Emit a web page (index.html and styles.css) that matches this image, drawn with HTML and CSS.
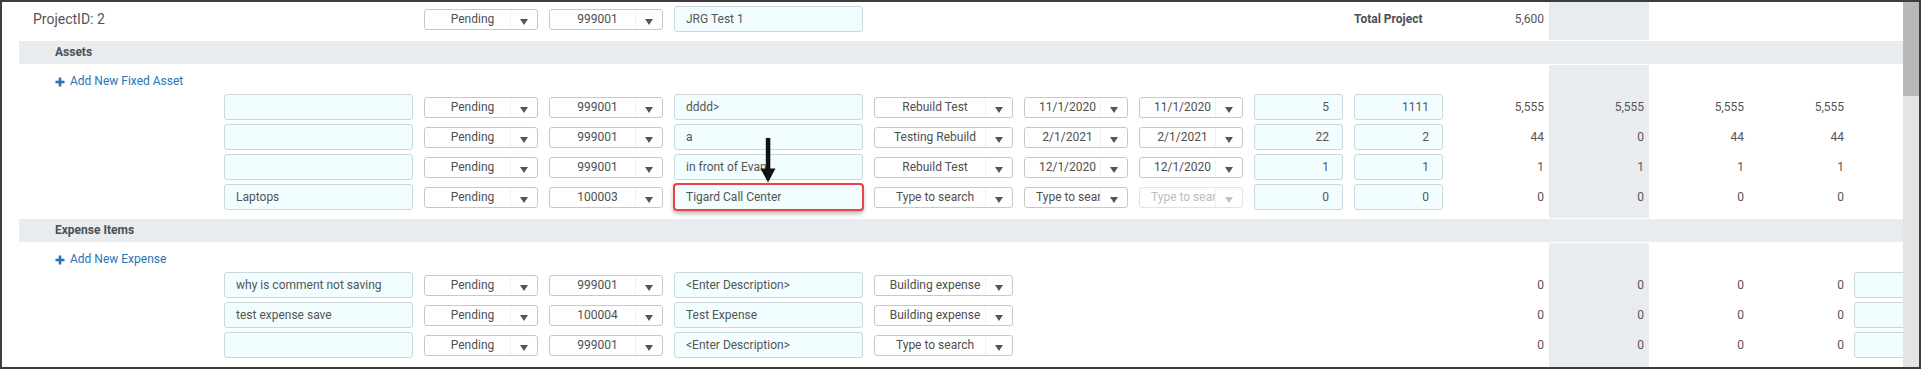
FILE: index.html
```html
<!DOCTYPE html>
<html lang="en">
<head>
    <meta charset="UTF-8">
    <title>Project Budget</title>
    <link rel="stylesheet" href="styles.css">
</head>
<body>
    <div class="frame">
        <div class="page">

            <!-- Project header row -->
            <div class="block block-top">
                <div class="row row-top">
                    <div class="lead project-id">ProjectID: 2</div>
                    <div class="skip-wide"></div>
                    <span class="dd w-status"><span class="dd-text">Pending</span><span class="dd-btn"></span></span>
                    <span class="dd w-project"><span class="dd-text">999001</span><span class="dd-btn"></span></span>
                    <input class="tb w-wide" value="JRG Test 1">
                    <div class="skip-top"></div>
                    <div class="total-label">Total Project</div>
                    <div class="val val-first">5,600</div>
                </div>
            </div>

            <!-- Assets -->
            <div class="band">Assets</div>
            <div class="block block-assets">
                <div class="add-row">
                    <a class="add-link" href="#">
                        <svg width="10" height="10" viewBox="0 0 10 10"><rect x="3.7" y="0.5" width="2.6" height="9" fill="currentColor"/><rect x="0.5" y="3.7" width="9" height="2.6" fill="currentColor"/></svg>
                        Add New Fixed Asset
                    </a>
                </div>

                <div class="row">
                    <div class="lead"></div>
                    <input class="tb w-wide" value="">
                    <span class="dd w-status"><span class="dd-text">Pending</span><span class="dd-btn"></span></span>
                    <span class="dd w-project"><span class="dd-text">999001</span><span class="dd-btn"></span></span>
                    <input class="tb w-wide" value="dddd&gt;">
                    <span class="dd w-type"><span class="dd-text">Rebuild Test</span><span class="dd-btn"></span></span>
                    <span class="dd w-date"><span class="dd-text">11/1/2020</span><span class="dd-btn"></span></span>
                    <span class="dd w-date"><span class="dd-text">11/1/2020</span><span class="dd-btn"></span></span>
                    <input class="tb w-num" value="5">
                    <input class="tb w-num" value="1111">
                    <div class="val val-first">5,555</div>
                    <div class="val">5,555</div>
                    <div class="val">5,555</div>
                    <div class="val">5,555</div>
                </div>

                <div class="row">
                    <div class="lead"></div>
                    <input class="tb w-wide" value="">
                    <span class="dd w-status"><span class="dd-text">Pending</span><span class="dd-btn"></span></span>
                    <span class="dd w-project"><span class="dd-text">999001</span><span class="dd-btn"></span></span>
                    <input class="tb w-wide" value="a">
                    <span class="dd w-type"><span class="dd-text">Testing Rebuild</span><span class="dd-btn"></span></span>
                    <span class="dd w-date"><span class="dd-text">2/1/2021</span><span class="dd-btn"></span></span>
                    <span class="dd w-date"><span class="dd-text">2/1/2021</span><span class="dd-btn"></span></span>
                    <input class="tb w-num" value="22">
                    <input class="tb w-num" value="2">
                    <div class="val val-first">44</div>
                    <div class="val">0</div>
                    <div class="val">44</div>
                    <div class="val">44</div>
                </div>

                <div class="row">
                    <div class="lead"></div>
                    <input class="tb w-wide" value="">
                    <span class="dd w-status"><span class="dd-text">Pending</span><span class="dd-btn"></span></span>
                    <span class="dd w-project"><span class="dd-text">999001</span><span class="dd-btn"></span></span>
                    <input class="tb w-wide" value="in front of Evan">
                    <span class="dd w-type"><span class="dd-text">Rebuild Test</span><span class="dd-btn"></span></span>
                    <span class="dd w-date"><span class="dd-text">12/1/2020</span><span class="dd-btn"></span></span>
                    <span class="dd w-date"><span class="dd-text">12/1/2020</span><span class="dd-btn"></span></span>
                    <input class="tb w-num" value="1">
                    <input class="tb w-num" value="1">
                    <div class="val val-first">1</div>
                    <div class="val">1</div>
                    <div class="val">1</div>
                    <div class="val">1</div>
                </div>

                <div class="row">
                    <div class="lead"></div>
                    <input class="tb w-wide" value="Laptops">
                    <span class="dd w-status"><span class="dd-text">Pending</span><span class="dd-btn"></span></span>
                    <span class="dd w-project"><span class="dd-text">100003</span><span class="dd-btn"></span></span>
                    <!-- annotated field -->
                    <span class="flag-wrap">
                        <input class="tb w-flag flagged" value="Tigard Call Center">
                        <svg class="flag-arrow" width="16" height="45" viewBox="0 0 16 45"><rect x="5.8" y="0" width="4.5" height="32" fill="#111"/><polygon points="0.5,30.5 15.5,30.5 8,44.5" fill="#111"/></svg>
                    </span>
                    <span class="dd w-type"><span class="dd-text">Type to search</span><span class="dd-btn"></span></span>
                    <span class="dd w-date"><span class="dd-text dd-clip">Type to search</span><span class="dd-btn"></span></span>
                    <span class="dd w-date is-disabled"><span class="dd-text dd-clip">Type to search</span><span class="dd-btn"></span></span>
                    <input class="tb w-num" value="0">
                    <input class="tb w-num" value="0">
                    <div class="val val-first">0</div>
                    <div class="val">0</div>
                    <div class="val">0</div>
                    <div class="val">0</div>
                </div>
            </div>

            <!-- Expense Items -->
            <div class="band">Expense Items</div>
            <div class="block block-expenses">
                <div class="add-row">
                    <a class="add-link" href="#">
                        <svg width="10" height="10" viewBox="0 0 10 10"><rect x="3.7" y="0.5" width="2.6" height="9" fill="currentColor"/><rect x="0.5" y="3.7" width="9" height="2.6" fill="currentColor"/></svg>
                        Add New Expense
                    </a>
                </div>

                <div class="row">
                    <div class="lead"></div>
                    <input class="tb w-wide" value="why is comment not saving">
                    <span class="dd w-status"><span class="dd-text">Pending</span><span class="dd-btn"></span></span>
                    <span class="dd w-project"><span class="dd-text">999001</span><span class="dd-btn"></span></span>
                    <input class="tb w-wide" value="<Enter Description>">
                    <span class="dd w-type"><span class="dd-text">Building expense</span><span class="dd-btn"></span></span>
                    <div class="skip-asset"></div>
                    <div class="val val-first">0</div>
                    <div class="val">0</div>
                    <div class="val">0</div>
                    <div class="val">0</div>
                    <input class="tb w-tail" value="">
                </div>

                <div class="row">
                    <div class="lead"></div>
                    <input class="tb w-wide" value="test expense save">
                    <span class="dd w-status"><span class="dd-text">Pending</span><span class="dd-btn"></span></span>
                    <span class="dd w-project"><span class="dd-text">100004</span><span class="dd-btn"></span></span>
                    <input class="tb w-wide" value="Test Expense">
                    <span class="dd w-type"><span class="dd-text">Building expense</span><span class="dd-btn"></span></span>
                    <div class="skip-asset"></div>
                    <div class="val val-first">0</div>
                    <div class="val">0</div>
                    <div class="val">0</div>
                    <div class="val">0</div>
                    <input class="tb w-tail" value="">
                </div>

                <div class="row">
                    <div class="lead"></div>
                    <input class="tb w-wide" value="">
                    <span class="dd w-status"><span class="dd-text">Pending</span><span class="dd-btn"></span></span>
                    <span class="dd w-project"><span class="dd-text">999001</span><span class="dd-btn"></span></span>
                    <input class="tb w-wide" value="<Enter Description>">
                    <span class="dd w-type"><span class="dd-text">Type to search</span><span class="dd-btn"></span></span>
                    <div class="skip-asset"></div>
                    <div class="val val-first">0</div>
                    <div class="val">0</div>
                    <div class="val">0</div>
                    <div class="val">0</div>
                    <input class="tb w-tail" value="">
                </div>
            </div>
        </div>

        <div class="scrollbar"><div class="thumb"></div></div>
    </div>
</body>
</html>
```

FILE: styles.css
```css
html, body {
    margin: 0;
    padding: 0;
    background: #fff;
}

body {
    font-family: Roboto, "Liberation Sans", Arial, sans-serif;
    font-size: 12px;
    color: #555;
}

.frame {
    width: 1921px;
    height: 369px;
    box-sizing: border-box;
    border: 2px solid #3d3d3d;
    display: flex;
    overflow: hidden;
}

.page {
    flex: 1;
    overflow: hidden;
    min-width: 0;
}

/* grey total column runs down every block */
.block {
    background: linear-gradient(to right, transparent 1547px, #e9ecef 1547px, #e9ecef 1647px, transparent 1647px);
}

.block-top {
    height: 38px;
}

.block-assets {
    padding-bottom: 6px;
}

.block-expenses {
    padding-bottom: 10px;
}

.band {
    margin: 1px 0 1px 17px;
    height: 23px;
    line-height: 23px;
    padding-left: 36px;
    background: #e9ecef;
    font-weight: bold;
    color: #4a4f55;
}

.row {
    display: flex;
    align-items: center;
    height: 30px;
    white-space: nowrap;
}

.row-top {
    height: 26px;
    padding-top: 4px;
}

.lead {
    width: 222px;
    flex: none;
}

.project-id {
    box-sizing: border-box;
    padding-left: 31px;
    font-size: 14px;
    color: #555;
}

.skip-wide { width: 200px; flex: none; }
.skip-top { width: 480px; flex: none; }
.skip-asset { width: 430px; flex: none; }

.total-label {
    width: 100px;
    flex: none;
    font-weight: bold;
    color: #4a4f55;
}

.add-row {
    height: 20px;
    padding: 7px 0 0 53px;
}

.add-link {
    display: inline-flex;
    align-items: center;
    gap: 5px;
    color: #2874b5;
    text-decoration: none;
    line-height: 19px;
}

.add-link svg {
    display: block;
}

/* text boxes */
.tb {
    flex: none;
    height: 26px;
    box-sizing: border-box;
    margin: 0 11px 0 0;
    padding: 0 11px;
    border: 1px solid #cbd8db;
    border-radius: 3px;
    background: #f1fdfe;
    font-family: inherit;
    font-size: 12px;
    color: #555;
    outline: none;
}

.w-wide { width: 189px; }
.w-num { width: 89px; text-align: right; padding-right: 13px; }
.w-tail { width: 100px; margin-left: 5px; }

.flag-wrap {
    position: relative;
    flex: none;
    display: flex;
    margin-right: 11px;
}

.w-flag { width: 189px; margin: 0; }

.tb.flagged {
    outline: 2px solid #ee4148;
    outline-offset: -1px;
    box-shadow: 0 3px 5px rgba(0, 0, 0, 0.35);
}

.flag-arrow {
    position: absolute;
    left: 86px;
    top: -46px;
}

/* dropdowns */
.dd {
    flex: none;
    display: flex;
    height: 21px;
    box-sizing: border-box;
    margin-right: 11px;
    border: 1px solid #c8c8c8;
    border-radius: 3px;
    background: #fff;
    color: #4f4f4f;
}

.w-status, .w-project { width: 114px; }
.w-type { width: 139px; }
.w-date { width: 104px; }

.dd-text {
    flex: 1;
    min-width: 0;
    padding-left: 10px;
    line-height: 19px;
    text-align: center;
    overflow: hidden;
}

.dd-clip {
    text-align: left;
    padding-left: 11px;
}

.dd-btn {
    width: 26px;
    flex: none;
    border-left: 1px solid #f1f1f1;
    display: flex;
    justify-content: center;
    align-items: center;
}

.dd-btn::after {
    content: '';
    margin-top: 6px;
    border-left: 4px solid transparent;
    border-right: 4px solid transparent;
    border-top: 6px solid #555;
}

.dd.is-disabled {
    border-color: #e2e2e2;
    color: #bdbdbd;
}

.dd.is-disabled .dd-btn::after {
    border-top-color: #c4c4c4;
}

/* figures */
.val {
    flex: none;
    width: 100px;
    box-sizing: border-box;
    padding-right: 5px;
    text-align: right;
    color: #555;
}

.val-first {
    width: 95px;
}

.scrollbar {
    width: 16px;
    flex: none;
    background: #e4e4e4;
}

.thumb {
    height: 94px;
    background: #b9b9b9;
}
```
